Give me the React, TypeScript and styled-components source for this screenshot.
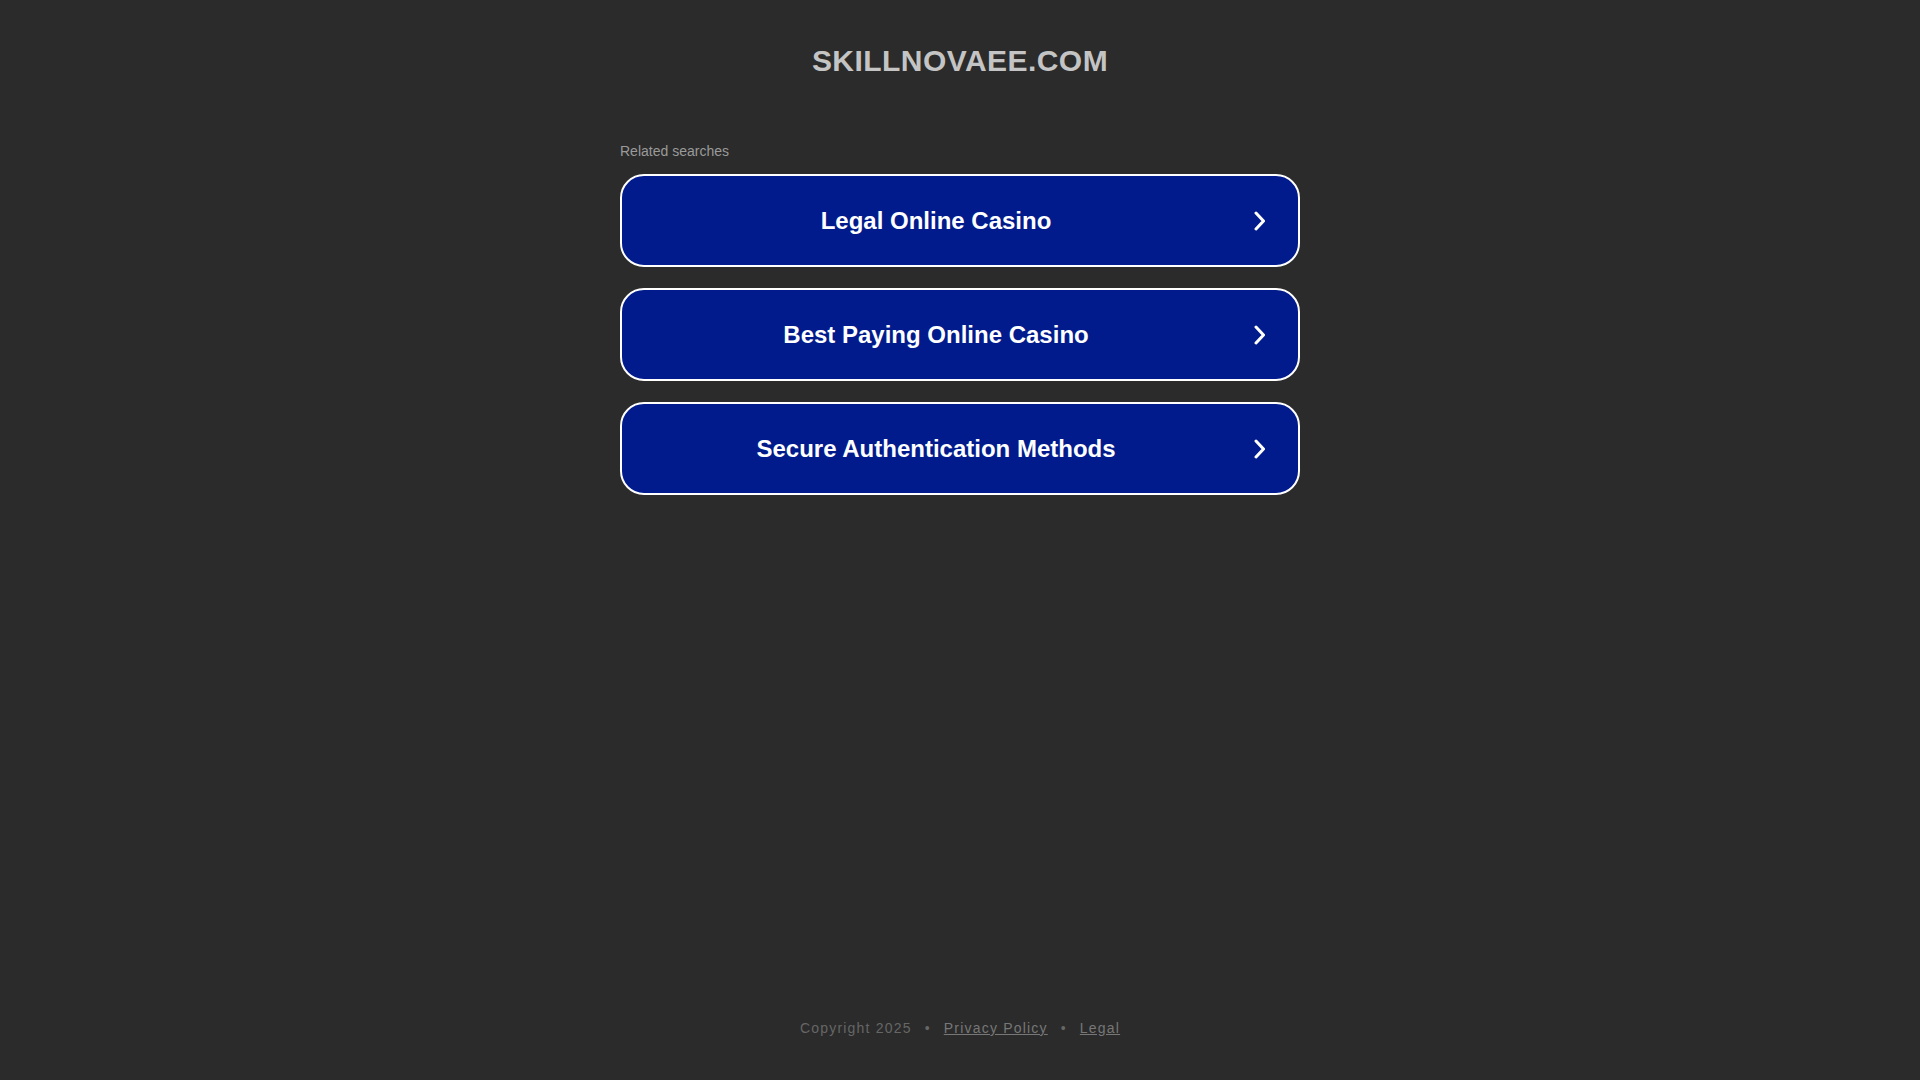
import React from 'react'
import styled, { createGlobalStyle } from 'styled-components'

const Global = createGlobalStyle`
  html, body {
    margin: 0;
    padding: 0;
    background: #2b2b2b;
    font-family: "Liberation Sans", Arial, sans-serif;
  }
`

const Page = styled.div`
  min-height: 100vh;
  display: flex;
  flex-direction: column;
  align-items: center;
`

const Domain = styled.h1`
  margin: 43px 0 0;
  font-size: 30px;
  line-height: 36px;
  font-weight: 700;
  color: #c4c4c4;
  letter-spacing: 0.45px;
  text-align: center;
`

const Results = styled.div`
  width: 680px;
  margin-top: 64px;
`

const Label = styled.div`
  font-size: 14px;
  line-height: 16px;
  color: #9a9a9a;
  margin-bottom: 15px;
`

const Button = styled.a`
  display: flex;
  align-items: center;
  box-sizing: border-box;
  height: 93px;
  margin-bottom: 21px;
  padding: 0 33px 0 0;
  background: #011b8c;
  border: 2px solid #ffffff;
  border-radius: 24px;
  color: #ffffff;
  text-decoration: none;
  cursor: pointer;
`

const ButtonText = styled.span`
  flex: 1;
  margin-right: 4px;
  text-align: center;
  font-size: 24px;
  font-weight: 700;
`

const Footer = styled.footer`
  margin-top: auto;
  padding-bottom: 42px;
  font-size: 14px;
  line-height: 20px;
  letter-spacing: 1.2px;
  color: #666666;
`

const FooterLink = styled.a`
  color: #777777;
  text-decoration: underline;
`

const Dot = styled.span`
  margin: 0 13px;
`

const Chevron = () => (
  <svg width="11" height="20" viewBox="0 0 11 20">
    <path d="M2 2 L9.5 10 L2 18" fill="none" stroke="#fff" strokeWidth="3" strokeLinecap="round" strokeLinejoin="round" />
  </svg>
)

const searches = ['Legal Online Casino', 'Best Paying Online Casino', 'Secure Authentication Methods']

export default function App() {
  return (
    <Page>
      <Global />
      <Domain>SKILLNOVAEE.COM</Domain>
      <Results>
        <Label>Related searches</Label>
        {searches.map((s) => (
          <Button key={s}>
            <ButtonText>{s}</ButtonText>
            <Chevron />
          </Button>
        ))}
      </Results>
      <Footer>
        Copyright 2025<Dot>•</Dot>
        <FooterLink>Privacy Policy</FooterLink>
        <Dot>•</Dot>
        <FooterLink>Legal</FooterLink>
      </Footer>
    </Page>
  )
}
